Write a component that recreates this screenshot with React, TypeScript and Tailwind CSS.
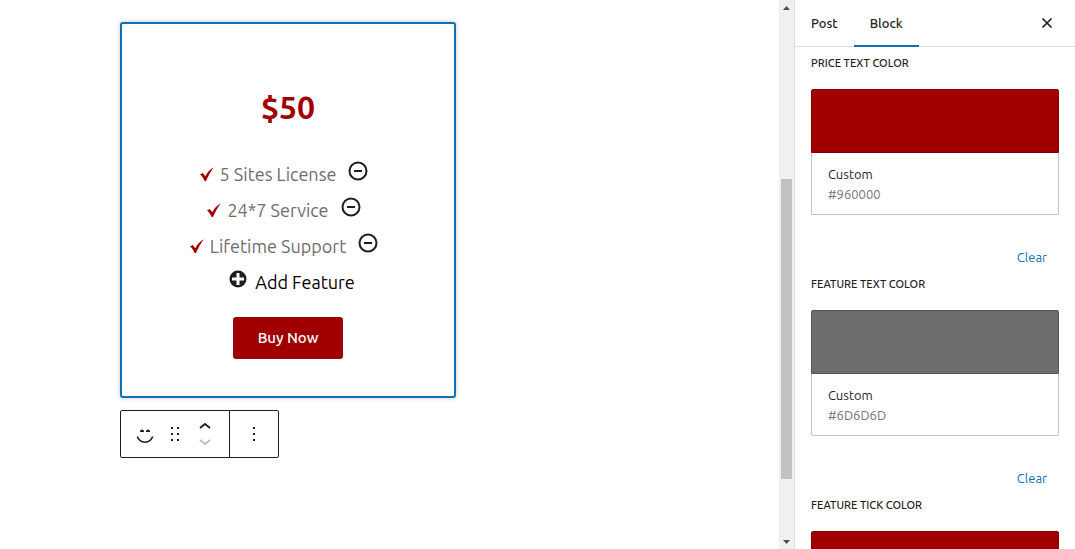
import React from "react";

type Feature = { id: number; label: string };

const features: Feature[] = [
  { id: 1, label: "5 Sites License" },
  { id: 2, label: "24*7 Service" },
  { id: 3, label: "Lifetime Support" },
];

function Tick() {
  return (
    <svg viewBox="0 0 14 14" className="h-3.5 w-3.5 fill-[#a00000]" aria-hidden="true">
      <path d="M0 7.400 2.800 6 5.300 9.200C7.200 5.600 10 2 14 0.200 10.800 4.200 8.400 8.600 6 14 4.600 14 4.200 13.400 3.800 12.400 2.800 10 1.400 8.400 0 7.400Z" />
    </svg>
  );
}

function MinusCircle() {
  return (
    <svg viewBox="0 0 20 20" className="size-5" aria-hidden="true">
      <circle cx="10" cy="10" r="8.500" fill="none" stroke="#1e1e1e" strokeWidth="2" />
      <path d="M6 9h8v2H6z" fill="#1e1e1e" />
    </svg>
  );
}

function PlusCircle() {
  return (
    <svg viewBox="0 0 18 18" className="size-[18px]" aria-hidden="true">
      <circle cx="9" cy="9" r="8.500" fill="#1e1e1e" />
      <path d="M9 3v12M3 9h12" stroke="#fff" strokeWidth="3" />
    </svg>
  );
}

function PricingCard() {
  return (
    <section className="flex w-84 flex-col items-center rounded-[3px] border-2 border-[#0f70b7] bg-white pt-[63px] pb-[37px] shadow-[0_0_4px_rgba(60,60,110,0.3)]">
      <h2 className="text-[32px] leading-10 font-bold text-[#a00000]">$50</h2>
      <ul className="mt-[29px] text-lg leading-9 text-[#6d6d6d]">
        {features.map((f) => (
          <li key={f.id} className="flex h-9 items-center justify-center">
            <Tick />
            <span className="ml-1.5">{f.label}</span>
            <button type="button" aria-label={`Remove ${f.label}`} className="mr-2 mb-1.5 ml-3">
              <MinusCircle />
            </button>
          </li>
        ))}
      </ul>
      <button type="button" className="flex h-9 items-center pl-2 text-lg text-black">
        <span className="mr-2 mb-1.5">
          <PlusCircle />
        </span>
        Add Feature
      </button>
      <a href="#buy" className="mt-[17px] rounded-[3px] bg-[#a00000] px-[25px] py-[9px] text-[15px] leading-6 font-medium text-white">
        Buy Now
      </a>
    </section>
  );
}

function BlockToolbar() {
  return (
    <div role="toolbar" aria-label="Block tools" className="mt-3 flex h-12 w-fit rounded-xs border border-[#1e1e1e] bg-white text-[#1e1e1e]">
      <div className="flex w-[109px] items-center border-r border-[#1e1e1e] pl-3">
        <button type="button" aria-label="Change block type" className="flex size-6 items-center justify-center">
          <svg viewBox="0 0 24 24" className="size-6">
            <path d="M4.300 14.600C5.600 18.400 8.600 20.200 12 20.200s6.400-1.800 7.700-5.600" fill="none" stroke="#1e1e1e" strokeWidth="1.600" />
            <path d="M7 10C7 8.300 7.600 7.500 9 7.500s2 .8 2 2.500zM13 10c0-1.700.6-2.500 2-2.500s2 .8 2 2.500z" fill="#1e1e1e" />
          </svg>
        </button>
        <button type="button" aria-label="Drag" className="ml-1.5 flex size-6 items-center justify-center">
          <svg viewBox="0 0 24 24" className="size-6" fill="#1e1e1e">
            <path d="M8 5h2v2H8zM14 5h2v2h-2zM8 11h2v2H8zM14 11h2v2h-2zM8 17h2v2H8zM14 17h2v2h-2z" />
          </svg>
        </button>
        <div className="ml-1.5 flex w-6 flex-col items-center">
          <button type="button" aria-label="Move up" className="flex h-4 items-center">
            <svg viewBox="0 0 12 8" className="h-2 w-3" fill="none" stroke="#1e1e1e" strokeWidth="1.800">
              <path d="M1 6l5-4 5 4" />
            </svg>
          </button>
          <button type="button" aria-label="Move down" disabled className="flex h-4 items-center">
            <svg viewBox="0 0 12 8" className="h-2 w-3" fill="none" stroke="#bbb" strokeWidth="1.800">
              <path d="M1 2l5 4 5-4" />
            </svg>
          </button>
        </div>
      </div>
      <button type="button" aria-label="Options" className="flex w-12 items-center justify-center">
        <svg viewBox="0 0 24 24" className="size-6" fill="#1e1e1e">
          <path d="M11 5h2v2h-2zM11 11h2v2h-2zM11 17h2v2h-2z" />
        </svg>
      </button>
    </div>
  );
}

function Scrollbar() {
  return (
    <div className="flex w-[15px] shrink-0 flex-col items-center bg-[#f0f0f0] pt-1.5 pb-[5px]" aria-hidden="true">
      <svg viewBox="0 0 7 4" className="h-1 w-[7px]" fill="#4d4d4d">
        <path d="M0 4 3.500 0 7 4z" />
      </svg>
      <div className="mt-[169px] h-[300px] w-[11px] bg-[#c1c1c1]" />
      <svg viewBox="0 0 7 4" className="mt-auto h-1 w-[7px]" fill="#4d4d4d">
        <path d="M0 0 3.500 4 7 0z" />
      </svg>
    </div>
  );
}

type ColorFieldProps = { title: string; value?: string; swatch: string };

function ColorField({ title, value, swatch }: ColorFieldProps) {
  return (
    <section>
      <h3 className="text-[11px] leading-4 font-medium text-[#1e1e1e] uppercase">{title}</h3>
      <button type="button" aria-label={value ? undefined : title} className="mt-[18px] block w-full text-left text-[13px] leading-5">
        <span className={`block h-16 rounded-t-xs border ${swatch}`} />
        {value && (
          <span className="block rounded-b-xs border border-t-0 border-[#c3c3c3] px-4 pt-[11px] pb-2.5">
            <span className="block text-[#1e1e1e]">Custom</span>
            <span className="block text-[#757575]">{value}</span>
          </span>
        )}
      </button>
      {value && (
        <div className="mt-8 mb-[9px] flex justify-end pr-3">
          <button type="button" className="text-[13px] leading-5 text-[#0f70b7]">
            Clear
          </button>
        </div>
      )}
    </section>
  );
}

function Sidebar() {
  return (
    <aside className="flex w-[281px] shrink-0 flex-col border-l border-[#ddd] bg-white">
      <header className="flex h-[47px] shrink-0 items-stretch border-b border-[#ddd] text-[13px] font-medium text-[#1e1e1e]">
        <button type="button" className="-mb-px border-b-2 border-transparent px-4 pt-0.5">
          Post
        </button>
        <button type="button" className="-mb-px border-b-2 border-[#0f70b7] px-4 pt-0.5">
          Block
        </button>
        <button type="button" aria-label="Close settings" className="mr-4 ml-auto flex w-6 items-center justify-center">
          <svg viewBox="0 0 24 24" className="size-6" fill="none" stroke="#1e1e1e" strokeWidth="1.700">
            <path d="M7.500 7.500l9 9M16.500 7.500l-9 9" />
          </svg>
        </button>
      </header>
      <div className="flex-1 overflow-hidden px-4 pt-2">
        <ColorField title="Price text color" value="#960000" swatch="bg-[#a00000] border-[#800000]" />
        <ColorField title="Feature text color" value="#6D6D6D" swatch="bg-[#6d6d6d] border-[#555]" />
        <ColorField title="Feature tick color" swatch="bg-[#a00000] border-[#800000]" />
      </div>
    </aside>
  );
}

export default function App() {
  return (
    <div className="flex h-screen overflow-hidden bg-white font-['Ubuntu','Noto_Sans',sans-serif]">
      <main className="min-w-0 flex-1 overflow-hidden pt-[22px] pl-30">
        <PricingCard />
        <BlockToolbar />
      </main>
      <Scrollbar />
      <Sidebar />
    </div>
  );
}
